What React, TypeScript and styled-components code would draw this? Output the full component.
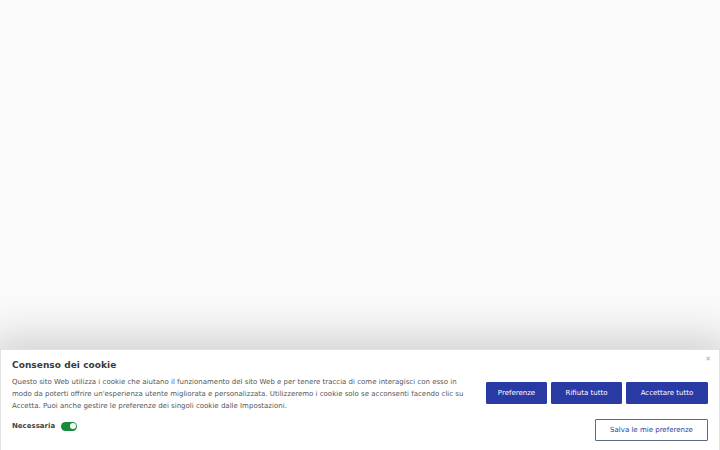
import React from "react";
import styled, { createGlobalStyle } from "styled-components";

const Global = createGlobalStyle`
  html, body { margin: 0; padding: 0; }
  body { background: #fafafa; font-family: "DejaVu Sans", "Liberation Sans", sans-serif; }
  * { box-sizing: border-box; }
`;

const Page = styled.div`
  height: 450px;
  display: flex;
  flex-direction: column;
  justify-content: flex-end;
  overflow: hidden;
`;

const Banner = styled.section`
  position: relative;
  background: #fff;
  border: 1px solid #e2e2e2;
  border-bottom: none;
  box-shadow: 0 0 44px 12px rgba(0, 0, 0, 0.17);
  padding: 9px 11px 8px 11px;
  display: grid;
  grid-template-columns: 1fr auto;
  column-gap: 18px;
  height: 101px;
`;

const Left = styled.div`
  display: flex;
  flex-direction: column;
`;

const Title = styled.h2`
  margin: 0;
  font-size: 9px;
  line-height: 12px;
  font-weight: bold;
  color: #3a3a3a;
  letter-spacing: 0.05px;
`;

const Body = styled.p`
  margin: 5px 0 0;
  font-size: 7px;
  line-height: 12px;
  color: #555;
  max-width: 462px;
`;

const ToggleRow = styled.div`
  margin-top: 8px;
  display: flex;
  align-items: center;
  gap: 6px;
  font-size: 7px;
  line-height: 12px;
  font-weight: bold;
  color: #444;
`;

const Switch = styled.span<{ on?: boolean }>`
  position: relative;
  display: inline-block;
  width: 16px;
  height: 9px;
  border-radius: 5px;
  background: ${(p) => (p.on ? "#188a3a" : "#bbb")};
  &::after {
    content: "";
    position: absolute;
    top: 1.5px;
    left: ${(p) => (p.on ? "8.5px" : "1.5px")};
    width: 6px;
    height: 6px;
    border-radius: 50%;
    background: #fff;
  }
`;

const Right = styled.div`
  display: flex;
  flex-direction: column;
  align-items: flex-end;
  padding-top: 23px;
  gap: 15px;
`;

const ButtonRow = styled.div`
  display: flex;
  gap: 4px;
`;

const Button = styled.button<{ $w: number; $outline?: boolean }>`
  width: ${(p) => p.$w}px;
  height: 22px;
  font-family: "DejaVu Sans", sans-serif;
  font-size: 7px;
  border-radius: 1px;
  cursor: pointer;
  padding: 0;
  ${(p) =>
    p.$outline
      ? `background: #fff; color: #2b3aa0; border: 1.5px solid #5c6b88;`
      : `background: #2a3aa5; color: #fff; border: 1px solid #2a3aa5;`}
`;

const Close = styled.span`
  position: absolute;
  top: 4px;
  right: 8px;
  font-size: 7px;
  color: #aaa;
  line-height: 10px;
`;

export default function App() {
  return (
    <>
      <Global />
      <Page>
        <Banner>
          <Close>✕</Close>
          <Left>
            <Title>Consenso dei cookie</Title>
            <Body>
              Questo sito Web utilizza i cookie che aiutano il funzionamento del sito Web e per tenere traccia di come interagisci con esso in modo da poterti offrire un'esperienza utente migliorata e personalizzata. Utilizzeremo i cookie solo se acconsenti facendo clic su Accetta. Puoi anche gestire le preferenze dei singoli cookie dalle Impostazioni.
            </Body>
            <ToggleRow>
              Necessaria
              <Switch on />
            </ToggleRow>
          </Left>
          <Right>
            <ButtonRow>
              <Button $w={61}>Preferenze</Button>
              <Button $w={71}>Rifiuta tutto</Button>
              <Button $w={82}>Accettare tutto</Button>
            </ButtonRow>
            <Button $w={113} $outline>Salva le mie preferenze</Button>
          </Right>
        </Banner>
      </Page>
    </>
  );
}
